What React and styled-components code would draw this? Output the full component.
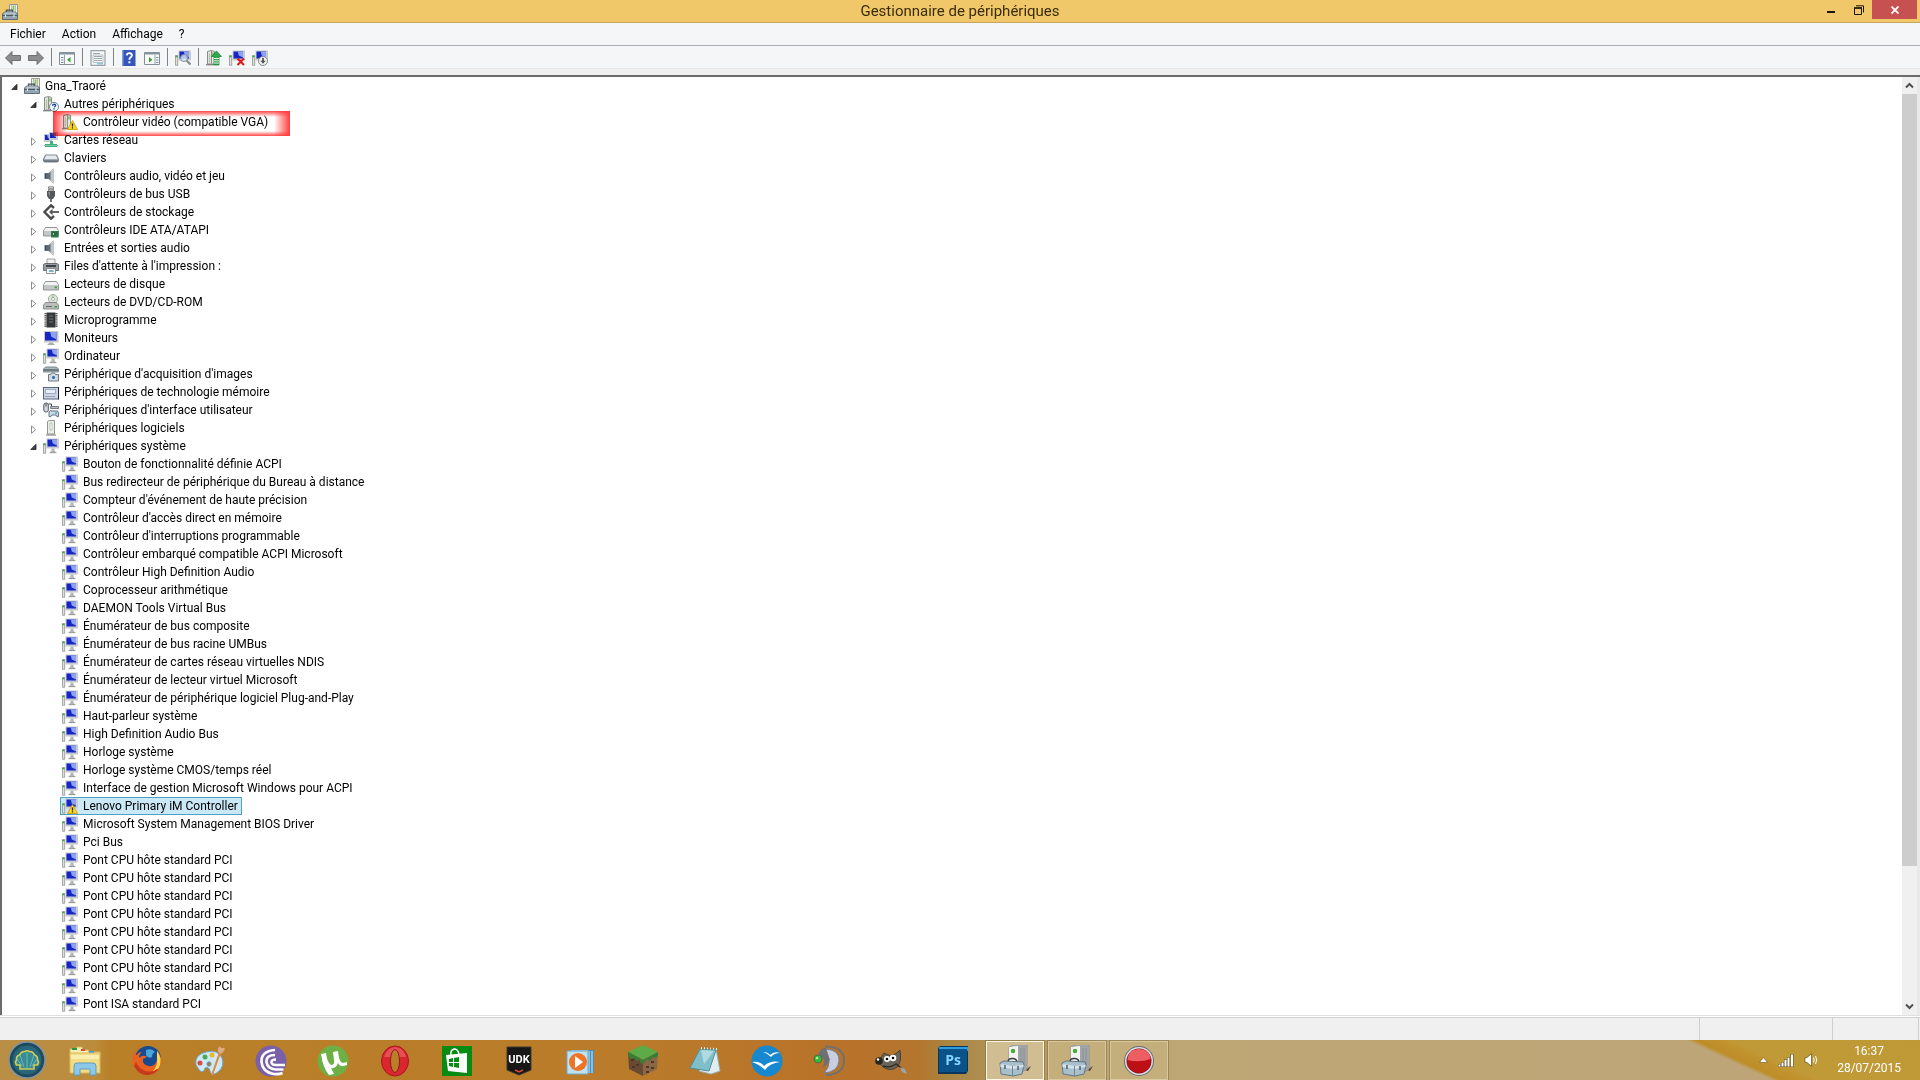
import React, { useState } from 'react';
import styled, { createGlobalStyle } from 'styled-components';

const GlobalStyle = createGlobalStyle`
  * {
    box-sizing: border-box;
  }
  body {
    margin: 0;
    font-family: Roboto, 'Open Sans', sans-serif;
    font-size: 12px;
    color: #000;
    background: #f0f0f0;
  }
  button {
    font: inherit;
    color: inherit;
    border: 0;
    padding: 0;
    background: none;
  }
`;

const Desktop = styled.div`
  display: flex;
  flex-direction: column;
  height: 100vh;
  overflow: hidden;
`;

const TitleBar = styled.header`
  display: grid;
  grid-template-columns: 1fr auto 1fr;
  height: 23px;
  flex: none;
  background: #f0c869;
  border-bottom: 1px solid #c8a560;
`;

const TitleIcon = styled.div`
  display: flex;
  align-items: center;
  padding-left: 2px;
`;

const Title = styled.h1`
  margin: 0;
  font-size: 15px;
  line-height: 23px;
  font-weight: 400;
  color: #3a2c0c;
`;

const WindowButtons = styled.div`
  display: flex;
  justify-content: flex-end;
  padding-right: 3px;
`;

const WindowButton = styled.button`
  display: flex;
  align-items: center;
  justify-content: center;
  width: ${({ $close }) => ($close ? '45px' : '27px')};
  height: 19px;
  background: ${({ $close }) => ($close ? '#c75050' : 'transparent')};
`;

const MenuBar = styled.nav`
  display: flex;
  flex: none;
  height: 23px;
  padding-left: 2px;
  background: #f5f6f7;
  border-bottom: 1px solid #a9aeb8;
`;

const MenuItem = styled.button`
  padding: 0 8px;
  line-height: 22px;
`;

const Toolbar = styled.div`
  display: flex;
  align-items: flex-end;
  flex: none;
  height: 23px;
  padding-left: 1px;
  background: #f5f6f7;
  border-bottom: 1px solid #e6e6e6;
`;

const ToolButton = styled.button`
  display: flex;
  align-items: center;
  justify-content: center;
  width: 23px;
  height: 20px;
`;

const ToolSeparator = styled.span`
  width: 1px;
  height: 18px;
  margin: 0 3px 2px 4px;
  background: #808488;
`;

const Content = styled.main`
  display: flex;
  flex: 1;
  min-height: 0;
  margin-top: 6px;
  border: solid #6b6b6b;
  border-width: 2px 0 0 2px;
  background: #fff;
`;

const Tree = styled.ul`
  flex: 1;
  margin: 0;
  padding: 0 0 0 4px;
  list-style: none;
  overflow: hidden;
`;

const Branch = styled.ul`
  margin: 0;
  padding: 0 0 0 19px;
  list-style: none;
`;

const Row = styled.div`
  position: relative;
  display: flex;
  height: 18px;
`;

const Toggle = styled.button`
  display: flex;
  align-items: center;
  justify-content: center;
  width: 16px;
  height: 18px;
`;

const Indent = styled.span`
  width: 16px;
`;

const Item = styled.span`
  display: flex;
  align-items: center;
  gap: 5px;
  padding: 0 3px 0 1px;
  line-height: 16px;
  white-space: nowrap;
  border: 1px solid ${({ $selected }) => ($selected ? '#4aa3c4' : 'transparent')};
  background: ${({ $selected }) => ($selected ? '#cbe8f6' : 'transparent')};
`;

const RedMark = styled.span`
  position: absolute;
  z-index: 1;
  left: 9px;
  top: -2px;
  width: 237px;
  height: 25px;
  pointer-events: none;
  mix-blend-mode: multiply;
  background:
    linear-gradient(90deg, #ff3c3c, transparent 14px),
    linear-gradient(270deg, #ff3c3c, transparent 16px),
    linear-gradient(180deg, #ff4646, transparent 6px),
    linear-gradient(0deg, #ff4646, transparent 5px);
`;

const ScrollBar = styled.div`
  display: flex;
  flex-direction: column;
  flex: none;
  width: 18px;
  border-right: 3px solid #e9e9e9;
  background: #f0f0f0;
`;

const ScrollButton = styled.button`
  display: flex;
  align-items: center;
  justify-content: center;
  height: 17px;
`;

const ScrollTrack = styled.div`
  flex: 1;
`;

const ScrollThumb = styled.div`
  height: 85.4%;
  background: #cdcdcd;
`;

const StatusBar = styled.footer`
  display: flex;
  justify-content: flex-end;
  flex: none;
  height: 25px;
  border-top: 1px solid #e0e0e0;
  background: #f0f0f0;
  box-shadow: inset 0 1px #fff, inset 0 2px #d2d2d2;
`;

const StatusCell = styled.span`
  width: ${({ $width }) => $width}px;
  margin-top: 2px;
  border-left: 1px solid #cfcfcf;
`;

const TaskBar = styled.footer`
  display: flex;
  align-items: stretch;
  flex: none;
  height: 40px;
  color: #fff;
  background:
    linear-gradient(25deg, transparent 28%, #bd8d27 31%, #c19430 39%, #c19a38 43%, #bf9936) right / 240px 100% no-repeat,
    linear-gradient(90deg, #b98f45, #bb8c3c 95px, #b98028 110px, #ba7c2a 600px, #b8722a 850px, #b4762f 920px, #a98440 945px, #b09055 990px, #bea674 1110px, #bda57a);
`;

const StartButton = styled.button`
  display: flex;
  align-items: center;
  justify-content: center;
  width: 54px;
  margin-right: 2px;
`;

const TaskList = styled.div`
  display: flex;
  flex: 1;
  gap: 4px;
`;

const TaskButton = styled.button`
  display: flex;
  align-items: center;
  justify-content: center;
  width: 58px;
  margin-top: 1px;
  border: 1px solid ${({ $state }) => (!$state ? 'transparent' : $state === 'active' ? '#fff8e4' : '#d8c8a0')};
  background: ${({ $state }) => (!$state ? 'none' : $state === 'active' ? '#d0bd92' : '#c4ae7c')};
  outline: ${({ $state }) => ($state ? '1px solid #7a683c80' : 'none')};
`;

const Tray = styled.div`
  display: flex;
  align-items: center;
  gap: 10px;
  padding-right: 19px;
`;

const TrayButton = styled.button`
  display: flex;
`;

const Clock = styled.time`
  display: flex;
  flex-direction: column;
  align-items: center;
  margin-left: 9px;
  line-height: 17px;
`;

const Svg16 = ({ children }) => (
  <svg width="16" height="16" viewBox="0 0 16 16" aria-hidden="true">
    {children}
  </svg>
);

const Svg32 = ({ children }) => (
  <svg width="32" height="32" viewBox="0 0 32 32" aria-hidden="true">
    {children}
  </svg>
);

const Screen = ({ x = 3.5, y = 0.5, w = 12.5, h = 10 }) => (
  <>
    <rect x={x} y={y} width={w} height={h} fill="#c8cad2" />
    <rect x={x + 1} y={y + 1} width={w - 3} height={h - 3} fill="#1626c4" />
    <path d={`M${x + w / 2 - 1} ${y + 1}H${x + w - 2}V${y + h - 3}L${x + w / 2} ${y + h / 2}z`} fill="#8ea2ee" />
  </>
);

const Warning = () => (
  <>
    <path d="M10.500 6.500L15.500 15.500H5.500z" fill="#ffd91c" stroke="#c99a00" strokeWidth=".8" strokeLinejoin="round" />
    <path d="M10.500 9.500v3M10.500 13.300v1.200" stroke="#222" strokeWidth="1.300" />
  </>
);

const Tower = () => (
  <>
    <path d="M1.500 1.500l4-1 3 1V14h-7z" fill="#e8eae8" stroke="#7d827d" strokeWidth=".9" />
    <path d="M5.500 1v12.500" stroke="#8b908b" />
    <path d="M3.500 3.500v9" stroke="#b4c5a8" strokeWidth="1.500" />
    <path d="M0 14.800h8" stroke="#666" />
    <rect x="6.200" y="2.500" width="1.500" height="3" fill="#72c24a" />
  </>
);

const Server = () => (
  <>
    <path d="M.5 5.500h2.200v9.800H.5z" fill="#dde0dc" stroke="#8f968e" strokeWidth=".8" />
    <path d="M.5 6.500h2" stroke="#35ad35" strokeWidth="1.500" />
  </>
);

const Computer = ({ warn }) => (
  <Svg16>
    <Server />
    <Screen />
    <path d="M8.500 10.500h3v2l2 2.500H6.500l2-2.500z" fill="#b4b7b5" />
    <path d="M6.500 14.700h7" stroke="#8e918f" strokeWidth=".8" />
    {warn && <Warning />}
  </Svg16>
);

const Toolbox = () => (
  <Svg16>
    <path d="M7.500 .5h8v10h-8z" fill="#eef0ea" stroke="#8f918a" strokeWidth=".9" />
    <path d="M9.500 1v8M13.500 1v8" stroke="#b9bcb4" />
    <path d="M11.500 1.500v5" stroke="#86c553" strokeWidth="1.800" />
    <path d="M4.500 8.500V6.200h6v2.300" fill="none" stroke="#45525a" strokeWidth="1.300" />
    <path d="M.5 10l2-2h11l2 2v5.500H.5z" fill="#93a5b0" stroke="#526370" strokeWidth=".9" />
    <path d="M2.800 8.600h10.400l1 1.200H1.700z" fill="#c3d0d8" />
    <path d="M.5 11.500h15" stroke="#4b5b66" />
    <path d="M3.500 10.500v2.500M12 10.500v2.500" stroke="#e2eaf0" strokeWidth="1.200" />
  </Svg16>
);

const OtherDevice = () => (
  <Svg16>
    <Tower />
    <circle cx="11" cy="10.800" r="4.500" fill="#f8fbff" stroke="#6f8196" />
    <path d="M9.500 9.800q.2-1.700 1.600-1.700 1.600.1 1.500 1.400-.1.800-1.500 1.800M11.100 12.300v1.300" fill="none" stroke="#1747a8" strokeWidth="1.400" />
  </Svg16>
);

const UnknownDevice = () => (
  <Svg16>
    <Tower />
    <Warning />
  </Svg16>
);

const Network = () => (
  <Svg16>
    <Screen x={1} y={2} w={8} h={8} />
    <Screen x={6} y={0} w={9} h={8} />
    <path d="M7 9h3v3h4v3H2v-3h5z" fill="#3eb27a" />
    <path d="M1 13.500h14" stroke="#7fc5a2" />
  </Svg16>
);

const Keyboard = () => (
  <Svg16>
    <path d="M.5 9l2-4h11l2 4v2l-1 1h-13l-1-1z" fill="#a4abb4" stroke="#5d6671" strokeWidth=".8" />
    <path d="M3 5.500h10L14.500 9h-13z" fill="#e7ebf0" />
    <path d="M1 11h14" stroke="#4f5863" />
  </Svg16>
);

const Speaker = () => (
  <Svg16>
    <path d="M1.500 5h4v6h-4z" fill="#5d6872" />
    <path d="M5 5.500L10.500 .5v15L5 10.500z" fill="#87929b" />
    <path d="M8 3l2.500-2.500v15L8 13z" fill="#c0c7cd" />
    <path d="M2.500 6v4M6 5v6" stroke="#3f4850" />
  </Svg16>
);

const Usb = () => (
  <Svg16>
    <path d="M5.500.8h5V5h-5z" fill="#d7d7d7" stroke="#777" strokeWidth=".8" />
    <path d="M7 2v2M9 2v2" stroke="#666" />
    <path d="M4 5h8v5l-2 3H6l-2-3z" fill="#55585b" />
    <path d="M5 6h2v5z" fill="#8a8e92" />
    <path d="M8 13v3" stroke="#444" strokeWidth="1.500" />
  </Svg16>
);

const Storage = () => (
  <Svg16>
    <path d="M11 4L8 1.300 1.500 8 8 14.700l3-2.700" fill="none" stroke="#4b4b4b" strokeWidth="2.400" />
    <path d="M8.500 8H16" stroke="#666" strokeWidth="2" />
    <path d="M9.500 4.800v6.400L6 8z" fill="#5a5a5a" />
  </Svg16>
);

const Disk = ({ chip }) => (
  <Svg16>
    <path d="M.5 9l2-3.500h11L15.500 9v5H.5z" fill="#c3c7c7" stroke="#7c8282" strokeWidth=".8" />
    <path d="M2.800 6h10.400l2 3H.9z" fill="#f1f3f3" />
    {chip ? (
      <>
        <rect x="8" y="9" width="7.500" height="6.500" fill="#2d7a4c" />
        <path d="M9.500 10.500h2v3h-2zM13 10v4" fill="#a5d3a9" stroke="#164d2b" strokeWidth=".7" />
      </>
    ) : (
      <rect x="11.500" y="10.500" width="2.500" height="1.800" fill="#38a638" />
    )}
  </Svg16>
);

const Dvd = () => (
  <Svg16>
    <circle cx="10" cy="5" r="4.600" fill="#dfe3df" stroke="#969d96" strokeWidth=".8" />
    <circle cx="10" cy="5" r="1.500" fill="#fff" stroke="#8aa98a" strokeWidth=".8" />
    <path d="M10 1v3" stroke="#7fc06a" />
    <path d="M.5 11l2-2.500h11l2 2.500v4H.5z" fill="#bbc0bc" stroke="#767d77" strokeWidth=".8" />
    <path d="M3 12.500h6" stroke="#666" />
    <rect x="11.500" y="12" width="2.500" height="1.500" fill="#32a23e" />
  </Svg16>
);

const Printer = () => (
  <Svg16>
    <path d="M4 1h8v5H4z" fill="#f0f0f0" stroke="#8d8d8d" strokeWidth=".8" />
    <path d="M.5 6.500l1.500-1h12l1.500 1v6H.5z" fill="#9a9da1" stroke="#55595d" strokeWidth=".8" />
    <path d="M3 7h10v2H3z" fill="#3e4347" />
    <path d="M3.500 10.500h9v5h-9z" fill="#f5f8fa" stroke="#777" strokeWidth=".8" />
    <path d="M6 13h4.500" stroke="#4b9dad" strokeWidth="1.500" />
  </Svg16>
);

const Chip = () => (
  <Svg16>
    <path d="M2.500 1v14M13.500 1v14" stroke="#555" strokeWidth="2" strokeDasharray="1.300 .8" />
    <rect x="3.500" y=".5" width="9" height="15" fill="#35383a" />
    <path d="M6 4h4M6 7h4M6 10h4" stroke="#6f7478" />
  </Svg16>
);

const Monitor = () => (
  <Svg16>
    <Screen x={1} y={1} w={14.5} h={11.5} />
    <path d="M6.500 12.500h3l2.500 2.500H4z" fill="#a9adb0" />
  </Svg16>
);

const Imaging = () => (
  <Svg16>
    <path d="M.5 3l2-2h11l2 2v3H.5z" fill="#aab9bc" stroke="#65757a" strokeWidth=".8" />
    <path d="M1 4h14" stroke="#4b5a60" strokeWidth="1.300" />
    <path d="M5.500 8.500h2l1-1.500h3l1 1.500h3v6.500H5.500z" fill="#cfd8de" stroke="#5f6d77" strokeWidth=".9" />
    <circle cx="10.500" cy="11.500" r="2.200" fill="#3c72ad" stroke="#e9f2f8" />
  </Svg16>
);

const Memory = () => (
  <Svg16>
    <rect x=".5" y="3.500" width="15" height="11.500" fill="#ccd5e4" stroke="#56637f" />
    <path d="M2.500 5.500h10v4h-10z" fill="#e8eef7" stroke="#8694af" strokeWidth=".7" />
    <path d="M2.500 12.500h9" stroke="#667595" strokeDasharray="1 1" />
    <path d="M15.500 3v12.500" stroke="#1f2940" />
  </Svg16>
);

const Hid = () => (
  <Svg16>
    <rect x=".8" y="1" width="4.500" height="9" rx="2" fill="#d6dade" stroke="#4e565e" />
    <path d="M3 1.500v3M5.500 2h3v3" fill="none" stroke="#444" />
    <path d="M7.500 4.500h8v2h-8z" fill="#b9c0c8" stroke="#5d6771" strokeWidth=".8" />
    <path d="M6 10q1-2.500 3-1h3q3-1 3.500 2v3.500q-1.500 1.500-2.500-1.500h-4q-1.500 3-3 1.500z" fill="#cbd9e4" stroke="#4f6577" strokeWidth=".9" />
    <circle cx="13" cy="11" r="1" fill="#4ca5cf" />
  </Svg16>
);

const Software = () => (
  <Svg16>
    <path d="M4.500 1.500l2-1h5V14h-7z" fill="#eceee9" stroke="#868b84" strokeWidth=".9" />
    <path d="M7 3h2v7H7z" fill="#fff" stroke="#a0b594" strokeWidth=".7" />
    <path d="M3 15h10" stroke="#777" />
  </Svg16>
);

const Arrow = ({ flip }) => (
  <Svg16>
    <path
      d={flip ? 'M15.500 8L9 1.500v4H.5v5H9v4z' : 'M.5 8L7 1.500v4h8.500v5H7v4z'}
      fill="#8d8d8d"
      stroke="#666"
      strokeWidth=".9"
    />
  </Svg16>
);

const Pane = ({ flip }) => (
  <Svg16>
    <path d="M.5 2.500h15v12H.5z" fill="#f8fafb" stroke="#858e96" />
    <path d="M1 3.500h14" stroke="#8592a0" strokeWidth="2" />
    <path d={flip ? 'M11 5v9' : 'M5.500 5v9'} stroke="#9ba3aa" />
    <path d={flip ? 'M12 7.500h2.500M12 10h2.500M12 12.500h2.500' : 'M2 7.500h2.500M2 10h2.500M2 12.500h2.500'} stroke="#6e8daf" />
    <path d={flip ? 'M5 7v5.500L8.500 9.700z' : 'M11.500 7v5.500L8 9.700z'} fill="#37a324" />
  </Svg16>
);

const Properties = () => (
  <Svg16>
    <rect x="1" y=".7" width="14" height="14.600" fill="#f5f7f8" stroke="#858c91" />
    <path d="M3 3.500h7M4 6.500h8M4 8.500h8M4 10.500h8" stroke="#9ba8b0" />
    <path d="M3 5h10v7.500H3z" fill="none" stroke="#b0b8bd" strokeWidth=".8" />
    <path d="M7 13.800h6" stroke="#58b6c9" />
  </Svg16>
);

const Help = () => (
  <Svg16>
    <rect x="1.500" y="0" width="13" height="16" fill="#3557b9" />
    <path d="M2 0v16" stroke="#7b95dd" />
    <path d="M5.800 5.300q.3-2.300 2.600-2.200q2.600.2 2.500 2.300q-.2 1.300-1.500 2.100q-1 .7-1 2.200M8.400 11.300v2" fill="none" stroke="#fff" strokeWidth="1.900" />
  </Svg16>
);

const Scan = () => (
  <Svg16>
    <Server />
    <Screen />
    <circle cx="9" cy="8" r="3.500" fill="#d8ebf8cc" stroke="#7d8b98" />
    <path d="M11.500 10.500l4 4" stroke="#84898d" strokeWidth="2" />
  </Svg16>
);

const UpdateDriver = () => (
  <Svg16>
    <Tower />
    <path d="M10.500 1L15.500 6.500h-2.500V15H8V6.500H5.500z" fill="#30a84e" stroke="#15793a" strokeWidth=".7" />
    <path d="M8 8.500h5M8 10.800h5M8 13h5" stroke="#e4f6e8" />
  </Svg16>
);

const Uninstall = () => (
  <Svg16>
    <Server />
    <Screen />
    <path d="M8.500 8.500l6.500 6.500M15 8.500L8.500 15" stroke="#e01818" strokeWidth="2" />
  </Svg16>
);

const Disable = () => (
  <Svg16>
    <Server />
    <Screen />
    <circle cx="11" cy="11" r="4.500" fill="#f0f1f2" stroke="#858a8e" />
    <path d="M11 8v3.500" stroke="#555" strokeWidth="1.800" />
    <path d="M8.300 10.800h5.400L11 13.800z" fill="#555" />
  </Svg16>
);

const taskIcons = {
  explorer: (
    <Svg32>
      <path d="M1 4h6l1-2h5l1 3h5l1 2h11v5H1z" fill="#f8ecb1" stroke="#d1b465" />
      <path d="M3 3h5v2H3z" fill="#1ca044" />
      <path d="M12 4h4v2h-4z" fill="#d84b3d" />
      <path d="M20 6h5v2h-5z" fill="#3c9ed8" />
      <path d="M1 8h30v20H1z" fill="#f4dc85" stroke="#d7b75b" />
      <path d="M2 10h28v4H2z" fill="#fbecb0" />
      <path d="M5 30V21q0-3 3-3h16q3 0 3 3v9h-6v-6H11v6z" fill="#8cc9e8" stroke="#5d9ebf" />
    </Svg32>
  ),
  firefox: (
    <Svg32>
      <circle cx="17" cy="14" r="13" fill="#174a91" />
      <path d="M15 5q6-2 9 2q-3 1-3 5q-4 2-6-2z" fill="#4ba5d8" />
      <path d="M3 7Q0 14 3 21q5 10 15 9q12-2 12-15q0-5-4-9q2 8-2 13q-4 4-9 1q-4-2-3-6l4-2q-4-3-8 1q0-4 3-6q-4 0-5 3q-2 0-2-4z" fill="#e96020" />
      <path d="M26 6q5 6 3 14q-3 9-12 10q8-5 9-12z" fill="#ffd451" />
      <path d="M3 21q5 10 15 9q7-1 10-7q-8 6-16 2q-5-3-7-8z" fill="#c6391b" />
    </Svg32>
  ),
  paint: (
    <Svg32>
      <path d="M3 20Q1 10 13 7q12-3 16 6q3 8-4 14q-7 5-8-1q-1-5-5-3q-1 5-5 3z" fill="#cce9f6" stroke="#6ba4c8" />
      <circle cx="7" cy="18" r="2.500" fill="#d84c43" />
      <circle cx="12" cy="12" r="2.500" fill="#4da853" />
      <circle cx="19" cy="10" r="2.500" fill="#e8b92e" />
      <circle cx="16" cy="19" r="2.200" fill="#a87b35" stroke="#6ba4c8" />
      <path d="M18 30L26 7l2 1L20 30z" fill="#e5893d" />
      <path d="M25 7q-1-4 2-6q0 2 2 2q2-1 3 1q-2 4-4 5z" fill="#d8ab84" />
    </Svg32>
  ),
  bittorrent: (
    <Svg32>
      <circle cx="16" cy="16" r="15.500" fill="#7a60a8" />
      <path d="M20 5Q6 6 6.500 17q1 10 12 12 6 .5 9-1M20 10Q11 10 11.500 17q1 7 9 7.500h8M21 14.500q-5 0-4.500 3 .8 3 5.500 2.500h8" fill="none" stroke="#fff" strokeWidth="2.600" />
    </Svg32>
  ),
  utorrent: (
    <Svg32>
      <circle cx="16" cy="16" r="15.500" fill="#6db144" />
      <path d="M4 9l5-1q1 9 5 12q4 0 3-5l-1-8 5-1q1 12 5 12l4-1v3q-7 3-9-2q-2 6-7 5l3 6-5 1Q6 23 4 9z" fill="#fff" />
    </Svg32>
  ),
  opera: (
    <Svg32>
      <ellipse cx="16" cy="16" rx="13.500" ry="15" fill="#d9262f" stroke="#a91520" />
      <path d="M5 12Q9 2 16 2q8 0 11 10z" fill="#ee6c6e" opacity=".6" />
      <ellipse cx="16" cy="16" rx="4.500" ry="11.500" fill="#b98028" stroke="#951621" />
    </Svg32>
  ),
  store: (
    <Svg32>
      <rect x="1" y="1" width="30" height="30" fill="#078b13" />
      <path d="M5 10l21-2v20L7 26z" fill="#fff" />
      <path d="M10 11q-1-6 3-7q4 0 5 5" fill="none" stroke="#fff" strokeWidth="1.500" />
      <path d="M8 14l4-1v4H8zM13 13l5-1v5h-5zM8 18h4v4l-4-1zM13 18h5v5l-5-1z" fill="#078b13" />
    </Svg32>
  ),
  udk: (
    <Svg32>
      <path d="M4 2h24v23l-12 5-12-5z" fill="#171717" stroke="#3a3833" />
      <text x="16" y="18" textAnchor="middle" fontFamily="Roboto, sans-serif" fontSize="11" fontWeight="700" fill="#fff">UDK</text>
      <path d="M12 25l4 2 4-2" fill="none" stroke="#d44b2d" strokeWidth="1.500" />
    </Svg32>
  ),
  media: (
    <Svg32>
      <path d="M9 5h20v23H9z" fill="#468fbd" />
      <path d="M27 6v22M24 6v22" stroke="#d8eef8" />
      <path d="M6 5h17v24H6z" fill="#95c9e6" />
      <path d="M2 6h21v23H2z" fill="#bfe2f1" stroke="#6ea8c7" />
      <circle cx="13" cy="17" r="9" fill="#ef7426" />
      <path d="M10 11v12l8-6z" fill="#fff" />
    </Svg32>
  ),
  minecraft: (
    <Svg32>
      <path d="M16 0l15 7-15 8L1 7z" fill="#5eaa48" />
      <path d="M1 7l15 8v16L2 24z" fill="#684931" />
      <path d="M16 15l15-8-1 17-14 7z" fill="#8b6747" />
      <path d="M1 7l15 8v4l-3-1v-3l-3 1-3-3-3 1-3-3zM16 15l15-8v4l-3 2-2-1-3 4-3-2-4 5z" fill="#397e34" />
      <path d="M4 15h3M9 20h3M5 22h3M19 22h3M24 17h3M24 23h3M19 27h3" stroke="#4c3525" strokeWidth="2" />
    </Svg32>
  ),
  notepad: (
    <Svg32>
      <path d="M27 4l4 22-9 3-12-3z" fill="#e3ecee" stroke="#9bb4bb" />
      <path d="M11 4l16 1-7 21-19-3z" fill="#7fbfc9" stroke="#4f8f9c" />
      <path d="M12 5l13 1-10 13z" fill="#c5e6e8" opacity=".7" />
      <path d="M12 3l16 1" stroke="#eee" strokeWidth="2" strokeDasharray="1 2" />
    </Svg32>
  ),
  openoffice: (
    <Svg32>
      <circle cx="16" cy="16" r="15.500" fill="#1787cf" />
      <path d="M12 7q5 0 7 3q4-4 10-2q-6 0-9 4q-4-4-8-5zM1 17q8-1 12 4q6-6 16-4q-10 1-15 8q-6-6-13-8z" fill="#fff" />
    </Svg32>
  ),
  teamspeak: (
    <Svg32>
      <path d="M12 1.500q19 0 19 14T13 30" fill="none" stroke="#70716f" strokeWidth="2" />
      <path d="M13 4q14 1 13 12t-15 12q5-5 5-11T13 4z" fill="#c8cee0" stroke="#757b8f" />
      <path d="M5 12q2-10 8-9q0 7 4 11q-2 6-8 9q4-5 1-10z" fill="#6d6f77" />
      <circle cx="5" cy="14" r="4" fill="#3ab63b" stroke="#4e6e44" />
      <circle cx="4" cy="13" r="1.300" fill="#a8ef9c" />
    </Svg32>
  ),
  gimp: (
    <Svg32>
      <path d="M3 17l6-9 4 2q6 2 12-5q2 12-3 17q-6 5-14 0z" fill="#6a6459" stroke="#464138" />
      <circle cx="4" cy="16" r="3.800" fill="#262522" />
      <circle cx="3" cy="14.500" r="1.200" fill="#fff" />
      <circle cx="12" cy="14" r="3" fill="#fff" />
      <circle cx="12" cy="14" r="1.300" />
      <circle cx="18" cy="13" r="3.300" fill="#fff" />
      <circle cx="18" cy="13" r="1.300" />
      <path d="M8 21q8 2 13-2l8 6" fill="none" stroke="#302c28" strokeWidth="1.500" />
      <path d="M25 22l5 2 2 5-5-2z" fill="#9ea3a7" />
    </Svg32>
  ),
  photoshop: (
    <Svg32>
      <path d="M1 3l2-2h28v25l-2 3H1z" fill="#07355c" />
      <path d="M2 2h29v4H2z" fill="#2f9fdc" />
      <path d="M2 4h28v23H2z" fill="#0b5289" />
      <text x="16" y="20" textAnchor="middle" fontFamily="'Open Sans', sans-serif" fontSize="14" fontWeight="700" fill="#83d6ff">Ps</text>
    </Svg32>
  ),
  devices: (
    <Svg32>
      <path d="M26 25l6-4-3 5z" fill="#53452d" />
      <path d="M10 2l5-2h13v24l-8 5h-10z" fill="#b5b8ba" stroke="#85888a" strokeWidth=".8" />
      <path d="M10 2l9-1v26h-9z" fill="#f2f3f3" />
      <path d="M19 1h8v23l-8 3z" fill="#a2a5a7" />
      <path d="M22 3v20M25 3v18" stroke="#8c9092" />
      <circle cx="14" cy="6" r="2.200" fill="#45ab32" />
      <path d="M9 17q0-4 5-3.500 4 .5 4 4" fill="none" stroke="#333c42" strokeWidth="1.500" />
      <path d="M1 18l4-2 19 1 1 3-2 9-9 2-12-2z" fill="#a9c0cc" stroke="#5f7786" />
      <path d="M1.500 19l12 2 11-1v2l-11 2-12-2z" fill="#d5e3ea" />
      <path d="M13.500 21v10" stroke="#6f8795" />
      <path d="M6 20v4M19 21v4" stroke="#4d616d" strokeWidth="1.500" />
    </Svg32>
  ),
  record: (
    <Svg32>
      <circle cx="16" cy="16" r="15" fill="#666d78" />
      <circle cx="16" cy="16" r="14" fill="#d9dde3" />
      <circle cx="16" cy="16" r="12.500" fill="#8a1016" />
      <circle cx="16" cy="16" r="11.800" fill="#bd0f16" />
      <path d="M4.500 15Q5 4 16 4t11.500 10q-11 4-23 1z" fill="#ed5e62" />
    </Svg32>
  ),
};

const StartLogo = () => (
  <svg width="38" height="38" viewBox="0 0 38 38" aria-hidden="true">
    <circle cx="19" cy="19" r="18" fill="#1f4a5e" stroke="#8494a0" strokeWidth="1.500" />
    <circle cx="19" cy="19" r="14.500" fill="#28677b" />
    <path d="M12 28v-4H8.500q-2-3 0-5-.5-4 3-5 2-4 5.500-3.500 2-1.500 4 0 4-.5 5.500 3.500 3.500 1 3 5 2 2 0 5H26v4z" fill="#378c93" stroke="#d2cd54" strokeWidth="1.600" />
    <path d="M19 27V12M16 26l-4-12M22 26l4-12M14 25l-5-7M24 25l5-7" stroke="#7fc2bd" strokeWidth=".8" />
  </svg>
);

const tools = [
  { label: 'Précédent', icon: <Arrow /> },
  { label: 'Suivant', icon: <Arrow flip /> },
  null,
  { label: 'Arborescence', icon: <Pane /> },
  null,
  { label: 'Propriétés', icon: <Properties /> },
  null,
  { label: 'Aide', icon: <Help /> },
  { label: 'Volet Action', icon: <Pane flip /> },
  null,
  { label: 'Rechercher les modifications', icon: <Scan /> },
  null,
  { label: 'Mettre à jour le pilote', icon: <UpdateDriver /> },
  { label: 'Désinstaller', icon: <Uninstall /> },
  { label: 'Désactiver', icon: <Disable /> },
];

const systemDevices = [
  'Bouton de fonctionnalité définie ACPI',
  'Bus redirecteur de périphérique du Bureau à distance',
  "Compteur d'événement de haute précision",
  "Contrôleur d'accès direct en mémoire",
  "Contrôleur d'interruptions programmable",
  'Contrôleur embarqué compatible ACPI Microsoft',
  'Contrôleur High Definition Audio',
  'Coprocesseur arithmétique',
  'DAEMON Tools Virtual Bus',
  'Énumérateur de bus composite',
  'Énumérateur de bus racine UMBus',
  'Énumérateur de cartes réseau virtuelles NDIS',
  'Énumérateur de lecteur virtuel Microsoft',
  'Énumérateur de périphérique logiciel Plug-and-Play',
  'Haut-parleur système',
  'High Definition Audio Bus',
  'Horloge système',
  'Horloge système CMOS/temps réel',
  'Interface de gestion Microsoft Windows pour ACPI',
  'Lenovo Primary iM Controller',
  'Microsoft System Management BIOS Driver',
  'Pci Bus',
  ...Array(8).fill('Pont CPU hôte standard PCI'),
  'Pont ISA standard PCI',
].map((label) =>
  label.startsWith('Lenovo') ? { label, icon: <Computer warn />, selected: true } : { label, icon: <Computer /> }
);

const categories = [
  {
    label: 'Autres périphériques',
    icon: <OtherDevice />,
    open: true,
    children: [{ label: 'Contrôleur vidéo (compatible VGA)', icon: <UnknownDevice />, marked: true }],
  },
  { label: 'Cartes réseau', icon: <Network />, children: [] },
  { label: 'Claviers', icon: <Keyboard />, children: [] },
  { label: 'Contrôleurs audio, vidéo et jeu', icon: <Speaker />, children: [] },
  { label: 'Contrôleurs de bus USB', icon: <Usb />, children: [] },
  { label: 'Contrôleurs de stockage', icon: <Storage />, children: [] },
  { label: 'Contrôleurs IDE ATA/ATAPI', icon: <Disk chip />, children: [] },
  { label: 'Entrées et sorties audio', icon: <Speaker />, children: [] },
  { label: "Files d'attente à l'impression :", icon: <Printer />, children: [] },
  { label: 'Lecteurs de disque', icon: <Disk />, children: [] },
  { label: 'Lecteurs de DVD/CD-ROM', icon: <Dvd />, children: [] },
  { label: 'Microprogramme', icon: <Chip />, children: [] },
  { label: 'Moniteurs', icon: <Monitor />, children: [] },
  { label: 'Ordinateur', icon: <Computer />, children: [] },
  { label: "Périphérique d'acquisition d'images", icon: <Imaging />, children: [] },
  { label: 'Périphériques de technologie mémoire', icon: <Memory />, children: [] },
  { label: "Périphériques d'interface utilisateur", icon: <Hid />, children: [] },
  { label: 'Périphériques logiciels', icon: <Software />, children: [] },
  { label: 'Périphériques système', icon: <Computer />, open: true, children: systemDevices },
];

const TreeNode = ({ node }) => {
  const [open, setOpen] = useState(Boolean(node.open));

  return (
    <li>
      <Row>
        {node.children ? (
          <Toggle aria-label={node.label} aria-expanded={open} onClick={() => setOpen(!open)}>
            <svg width="8" height="12" viewBox="0 0 8 12" aria-hidden="true">
              {open ? (
                <path d="M7 4.300V9.500H1.800z" fill="#404040" stroke="#222" strokeWidth=".8" />
              ) : (
                <path d="M2.500 4v7.300L6.700 7.700z" fill="#fff" stroke="#8c8c8c" />
              )}
            </svg>
          </Toggle>
        ) : (
          <Indent />
        )}
        <Item $selected={node.selected}>
          {node.icon}
          {node.label}
        </Item>
        {node.marked && <RedMark />}
      </Row>
      {open && node.children && (
        <Branch>
          {node.children.map((child, i) => (
            <TreeNode key={i} node={child} />
          ))}
        </Branch>
      )}
    </li>
  );
};

const Chevron = ({ down }) => (
  <svg width="9" height="7" viewBox="0 0 9 7" aria-hidden="true">
    <path d={down ? 'M1 1.500l3.500 3.500L8 1.500' : 'M1 5.500L4.500 2 8 5.500'} fill="none" stroke="#505050" strokeWidth="2" />
  </svg>
);

const tasks = [
  { icon: 'explorer' },
  { icon: 'firefox' },
  { icon: 'paint' },
  { icon: 'bittorrent' },
  { icon: 'utorrent' },
  { icon: 'opera' },
  { icon: 'store' },
  { icon: 'udk' },
  { icon: 'media' },
  { icon: 'minecraft' },
  { icon: 'notepad' },
  { icon: 'openoffice' },
  { icon: 'teamspeak' },
  { icon: 'gimp' },
  { icon: 'photoshop' },
  { icon: 'devices', state: 'active' },
  { icon: 'devices', state: 'open' },
  { icon: 'record', state: 'open' },
];

const App = () => (
  <Desktop>
    <GlobalStyle />
    <TitleBar>
      <TitleIcon>
        <Toolbox />
      </TitleIcon>
      <Title>Gestionnaire de périphériques</Title>
      <WindowButtons>
        <WindowButton aria-label="Réduire">
          <svg width="9" height="9" viewBox="0 0 9 9">
            <path d="M0 7h8" stroke="#1c170a" strokeWidth="2" />
          </svg>
        </WindowButton>
        <WindowButton aria-label="Restaurer">
          <svg width="10" height="10" viewBox="0 0 10 10">
            <path d="M.5 3h7v6.500h-7zM2 .8h7.500V7.500" fill="none" stroke="#1c170a" />
            <path d="M0 3h8" stroke="#1c170a" strokeWidth="1.500" />
          </svg>
        </WindowButton>
        <WindowButton $close aria-label="Fermer">
          <svg width="8" height="8" viewBox="0 0 8 8">
            <path d="M.5 .5l7 7M7.500 .5l-7 7" stroke="#fff" strokeWidth="1.800" />
          </svg>
        </WindowButton>
      </WindowButtons>
    </TitleBar>
    <MenuBar>
      {['Fichier', 'Action', 'Affichage', '?'].map((label) => (
        <MenuItem key={label}>{label}</MenuItem>
      ))}
    </MenuBar>
    <Toolbar>
      {tools.map((tool, i) =>
        tool ? (
          <ToolButton key={i} aria-label={tool.label}>
            {tool.icon}
          </ToolButton>
        ) : (
          <ToolSeparator key={i} />
        )
      )}
    </Toolbar>
    <Content>
      <Tree>
        <TreeNode node={{ label: 'Gna_Traoré', icon: <Toolbox />, open: true, children: categories }} />
      </Tree>
      <ScrollBar>
        <ScrollButton aria-label="Défiler vers le haut">
          <Chevron />
        </ScrollButton>
        <ScrollTrack>
          <ScrollThumb />
        </ScrollTrack>
        <ScrollButton aria-label="Défiler vers le bas">
          <Chevron down />
        </ScrollButton>
      </ScrollBar>
    </Content>
    <StatusBar>
      <StatusCell $width={133} />
      <StatusCell $width={86} />
      <StatusCell $width={2} />
    </StatusBar>
    <TaskBar>
      <StartButton aria-label="Démarrer">
        <StartLogo />
      </StartButton>
      <TaskList>
        {tasks.map(({ icon, state }, i) => (
          <TaskButton key={i} $state={state} aria-label={icon}>
            {taskIcons[icon]}
          </TaskButton>
        ))}
      </TaskList>
      <Tray>
        <TrayButton aria-label="Afficher les icônes cachées">
          <svg width="9" height="6" viewBox="0 0 9 6">
            <path d="M4.500 .5L8.500 5.500h-8z" fill="#fff" stroke="#655425" strokeWidth=".6" />
          </svg>
        </TrayButton>
        <TrayButton aria-label="Réseau">
          <svg width="16" height="14" viewBox="0 0 16 14">
            <path d="M1.500 11v3M4.500 9v5M7.500 6.500v7.500M10.500 4v10M14 1v13" stroke="#5e5023" strokeWidth="3" />
            <path d="M1.500 11.500v2M4.500 9.500v4M7.500 7v6.500M10.500 4.500v9M14 1.500v12" stroke="#fff" strokeWidth="2" />
          </svg>
        </TrayButton>
        <TrayButton aria-label="Volume">
          <svg width="14" height="14" viewBox="0 0 14 14">
            <path d="M1 4.500h2L7.500 .7v12.600L3 9.500H1z" fill="#fff" stroke="#5e5023" strokeWidth=".7" />
            <path d="M9.500 4.500q1.500 2.500 0 5M11.500 3q2.500 4 0 8" fill="none" stroke="#fff" />
          </svg>
        </TrayButton>
        <Clock>
          <span>16:37</span>
          <span>28/07/2015</span>
        </Clock>
      </Tray>
    </TaskBar>
  </Desktop>
);

export default App;
